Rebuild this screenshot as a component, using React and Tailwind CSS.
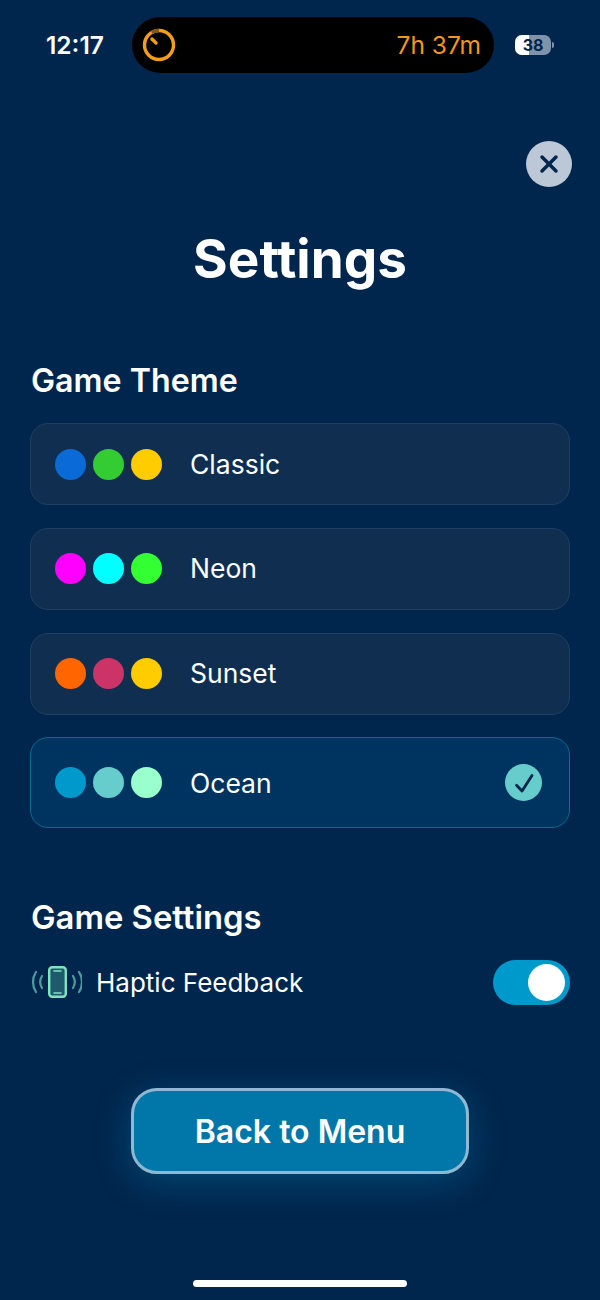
import { X } from 'lucide-react';

const themes = [
  { name: 'Classic', colors: ['bg-[#0a6ad6]', 'bg-[#33cc33]', 'bg-[#ffcc00]'] },
  { name: 'Neon', colors: ['bg-[#ff00ff]', 'bg-[#00ffff]', 'bg-[#33ff33]'] },
  { name: 'Sunset', colors: ['bg-[#ff6600]', 'bg-[#cc3366]', 'bg-[#ffcc00]'] },
  { name: 'Ocean', colors: ['bg-[#0099cc]', 'bg-[#66cccc]', 'bg-[#99ffcc]'], selected: true },
];

function ThemeCard({ theme }) {
  const box = theme.selected
    ? 'h-[91px] bg-[#003460] border-[#0f6a8f]'
    : 'h-[82px] bg-[#102f50] border-[#1f4060]';
  return (
    <div className={`flex items-center rounded-[18px] border pl-[24px] pr-[27px] ${box}`}>
      <div className="flex gap-[7px]">
        {theme.colors.map((c) => (
          <div key={c} className={`w-[31px] h-[31px] rounded-full ${c}`} />
        ))}
      </div>
      <span className="ml-[28px] pt-[1px] text-[26.5px] font-normal text-white">{theme.name}</span>
      {theme.selected && (
        <div className="ml-auto w-[37px] h-[37px] rounded-full bg-[#66cccc] flex items-center justify-center">
          <svg width="24" height="24" viewBox="0 0 24 24" fill="none">
            <path d="M4.5 14.3l5.5 5.7L20 4.5" stroke="#00264d" strokeWidth="2.8" strokeLinecap="round" strokeLinejoin="round" />
          </svg>
        </div>
      )}
    </div>
  );
}

function PhoneHaptic() {
  return (
    <svg width="52" height="36" viewBox="0 0 52 36" fill="none" className="shrink-0">
      <rect x="19.2" y="2.2" width="16.6" height="29.6" rx="3" fill="#1f5a6c" stroke="#7fe3bd" strokeWidth="2.4" />
      <path d="M24 6h7M24 28h7" stroke="#7fe3bd" strokeWidth="1.6" strokeLinecap="round" />
      <path d="M12 11c-2.2 3.6-2.2 8.4 0 12M6 7c-4 6-4 14 0 20" stroke="#4f9b9f" strokeWidth="2.2" strokeLinecap="round" />
      <path d="M43 11c2.2 3.6 2.2 8.4 0 12M49 7c4 6 4 14 0 20" stroke="#4f9b9f" strokeWidth="2.2" strokeLinecap="round" />
    </svg>
  );
}

export default function App() {
  return (
    <div className="relative w-[600px] h-[1300px] overflow-hidden bg-[#00264d] text-white font-['Inter',sans-serif]">
      {/* Status bar */}
      <div className="flex items-center pt-[17px] pl-[46px]">
        <span className="w-[86px] text-[24.5px] font-semibold leading-[56px]">12:17</span>
        <div className="flex items-center justify-between w-[362px] h-[56px] rounded-full bg-black pl-[10px] pr-[13px]">
          <svg width="34" height="34" viewBox="0 0 34 34" fill="none">
            <circle cx="17" cy="17" r="14.5" stroke="#f59e14" strokeWidth="3.4" />
            <path d="M9.75 4.44A14.5 14.5 0 0 1 17 2.5" stroke="#7d5a1c" strokeWidth="3.4" />
            <path d="M10 11l4 4" stroke="#f59e14" strokeWidth="3.4" strokeLinecap="round" />
          </svg>
          <span className="text-[24.5px] font-normal text-[#f0971a]">7h 37m</span>
        </div>
        <div className="ml-[21px] relative flex items-center">
          <div className="w-[36px] h-[20px] rounded-[7px] overflow-hidden flex bg-[#7f93ab]">
            <div className="w-[14px] bg-white" />
          </div>
          <span className="absolute left-0 w-[36px] text-center text-[16px] font-bold leading-[20px] text-[#00264d]">38</span>
          <div className="ml-[1px] w-[2px] h-[6px] rounded-r-sm bg-[#7f93ab]" />
        </div>
      </div>

      {/* Close */}
      <div className="flex justify-end pr-[28px] mt-[68px]">
        <button className="w-[46px] h-[46px] rounded-full bg-[#bcc8d6] flex items-center justify-center">
          <X className="w-[28px] h-[28px] text-[#00264d]" strokeWidth={3} />
        </button>
      </div>

      <h1 className="mt-[43px] text-center text-[53px] leading-[58px] font-bold">Settings</h1>

      <div className="px-[30px]">
        <h2 className="mt-[75px] pl-[1px] text-[32.2px] leading-[36px] font-semibold">Game Theme</h2>
        <div className="mt-[24px] flex flex-col gap-[22.8px]">
          {themes.map((t) => (
            <ThemeCard key={t.name} theme={t} />
          ))}
        </div>

        <h2 className="mt-[71px] pl-[1px] text-[32.8px] leading-[36px] font-semibold">Game Settings</h2>
        <div className="mt-[25px] flex items-center">
          <PhoneHaptic />
          <span className="ml-[14px] text-[26px] text-white">Haptic Feedback</span>
          <div className="ml-auto w-[77px] h-[45px] rounded-full bg-[#0099cc] flex items-center justify-end pr-[5px]">
            <div className="w-[37px] h-[37px] rounded-full bg-white" />
          </div>
        </div>
      </div>

      <div className="mt-[83px] flex justify-center">
        <button className="w-[338px] h-[86px] pt-[1px] rounded-[26px] border-[3px] border-[#8fb9d2] bg-[#0077a8] text-[32px] font-semibold text-white shadow-[0_8px_36px_rgba(0,153,204,0.3)]">
          Back to Menu
        </button>
      </div>

      <div className="absolute left-[193px] bottom-[13px] w-[214px] h-[7px] rounded-full bg-white" />
    </div>
  );
}
